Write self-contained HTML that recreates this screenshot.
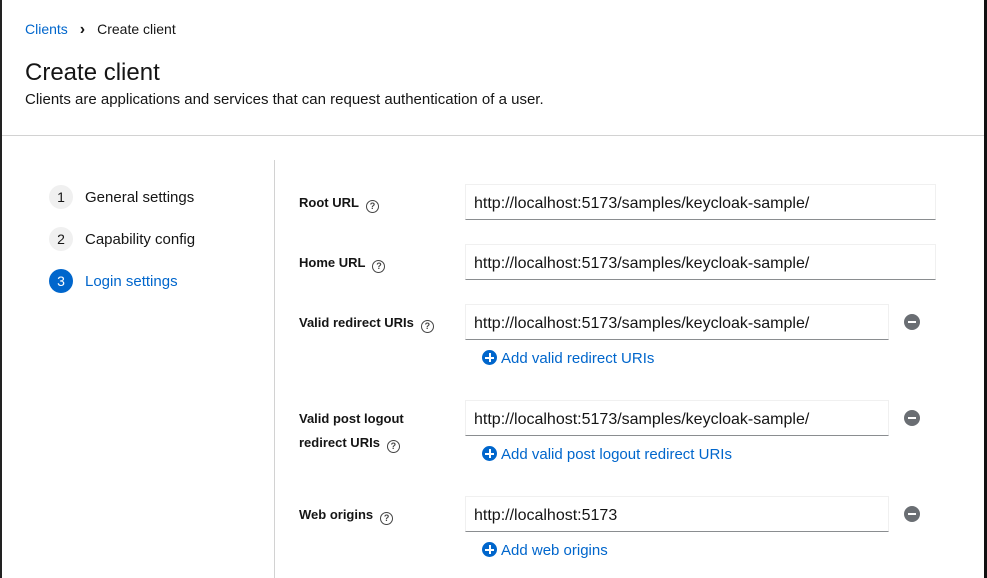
<!DOCTYPE html><html><head><style>
*{box-sizing:border-box;margin:0;padding:0}
body{width:987px;height:578px;overflow:hidden;background:#fff;font-family:"Liberation Sans",sans-serif;color:#151515;position:relative}
.a{position:absolute}
.lbl{position:absolute;left:299px;font-size:13px;font-weight:bold;line-height:24px}
.q{display:inline-block;width:13px;height:13px;border:1.5px solid #444;border-radius:50%;font-size:9px;text-align:center;line-height:10px;vertical-align:-2px;margin-left:7px;font-weight:bold;color:#444}
.inp{position:absolute;left:465px;height:36px;border:1px solid #f0f0f0;border-bottom:1px solid #8a8d90;font-size:16px;padding:10px 8px 6px;line-height:18px;color:#151515}
.rm{position:absolute;left:904px;width:16px;height:16px;border-radius:50%;background:#6a6e73}
.rm:after{content:"";position:absolute;left:4px;top:7px;width:8px;height:2px;background:#fff}
.add{position:absolute;left:482px;color:#0066cc;font-size:15px;line-height:18px}
.add i{display:inline-block;width:15px;height:15px;border-radius:50%;background:#0066cc;position:relative;vertical-align:-2px;margin-right:4px}
.add i:before{content:"";position:absolute;left:3px;top:6.5px;width:9px;height:2px;background:#fff}
.add i:after{content:"";position:absolute;left:6.5px;top:3px;width:2px;height:9px;background:#fff}
.step{position:absolute;left:49px;width:24px;height:24px;border-radius:50%;background:#f0f0f0;font-size:14px;text-align:center;line-height:24px;color:#151515}
.st{position:absolute;left:85px;font-size:15px;line-height:20px}
</style></head><body>
<div class="a" style="left:0;top:0;width:2px;height:578px;background:#222"></div>
<div class="a" style="left:984px;top:0;width:3px;height:578px;background:#111"></div>
<div class="a" style="left:25px;top:20px;font-size:14px;line-height:18px"><span style="color:#0066cc">Clients</span><span style="margin:0 12px;font-weight:bold;font-size:16px">›</span>Create client</div>
<div class="a" style="left:25px;top:58px;font-size:24px;line-height:30px">Create client</div>
<div class="a" style="left:25px;top:90px;font-size:15px;line-height:20px">Clients are applications and services that can request authentication of a user.</div>
<div class="a" style="left:2px;top:135px;width:982px;height:1px;background:#d2d2d2"></div>
<div class="a" style="left:274px;top:160px;width:1px;height:418px;background:#d2d2d2"></div>
<div class="step" style="top:185px">1</div><div class="st" style="top:188px">General settings</div>
<div class="step" style="top:227px">2</div><div class="st" style="top:230px">Capability config</div>
<div class="step" style="top:269px;background:#0066cc;color:#fff">3</div><div class="st" style="top:272px;color:#0066cc">Login settings</div>

<div class="lbl" style="top:191px">Root URL<span class="q">?</span></div>
<div class="inp" style="top:184px;width:471px">http://localhost:5173/samples/keycloak-sample/</div>
<div class="lbl" style="top:251px">Home URL<span class="q">?</span></div>
<div class="inp" style="top:244px;width:471px">http://localhost:5173/samples/keycloak-sample/</div>
<div class="lbl" style="top:311px">Valid redirect URIs<span class="q">?</span></div>
<div class="inp" style="top:304px;width:424px">http://localhost:5173/samples/keycloak-sample/</div>
<div class="rm" style="top:314px"></div>
<div class="add" style="top:350px"><i></i>Add valid redirect URIs</div>
<div class="lbl" style="top:407px">Valid post logout<br>redirect URIs<span class="q">?</span></div>
<div class="inp" style="top:400px;width:424px">http://localhost:5173/samples/keycloak-sample/</div>
<div class="rm" style="top:410px"></div>
<div class="add" style="top:446px"><i></i>Add valid post logout redirect URIs</div>
<div class="lbl" style="top:503px">Web origins<span class="q">?</span></div>
<div class="inp" style="top:496px;width:424px">http://localhost:5173</div>
<div class="rm" style="top:506px"></div>
<div class="add" style="top:542px"><i></i>Add web origins</div>
</body></html>
